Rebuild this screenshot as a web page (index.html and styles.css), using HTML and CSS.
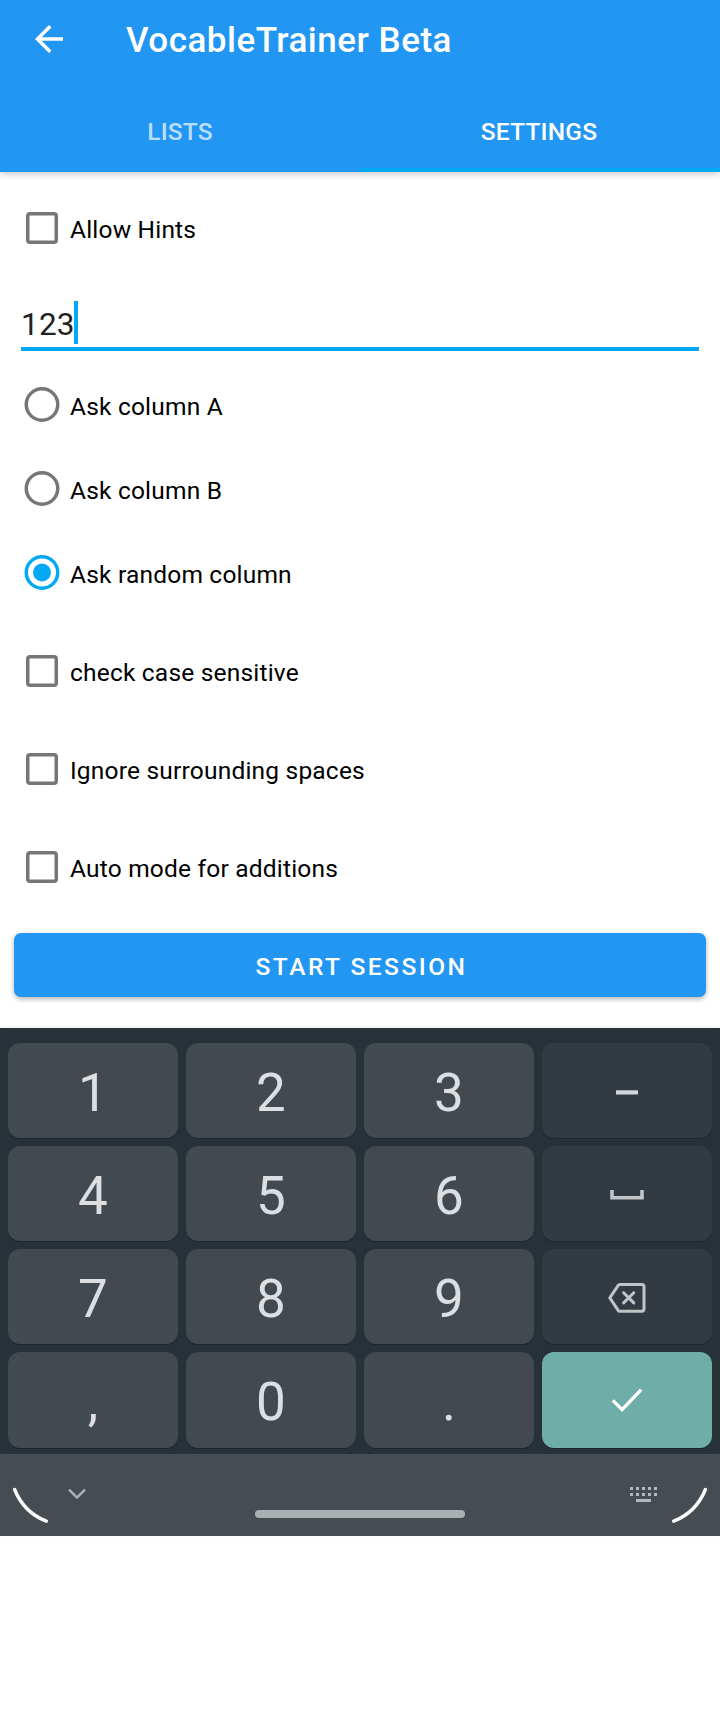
FILE: index.html
```html
<!DOCTYPE html>
<html lang="en">
<head>
<meta charset="utf-8">
<title>VocableTrainer Beta</title>
<link rel="stylesheet" href="styles.css">
</head>
<body>
<header class="appbar">
  <div class="toolbar">
    <svg class="back" width="42" height="42" viewBox="0 0 24 24"><path fill="#fff" d="M20 11H7.83l5.59-5.59L12 4l-8 8 8 8 1.41-1.41L7.83 13H20v-2z"/></svg>
    <h1 class="title">VocableTrainer Beta</h1>
  </div>
  <nav class="tabs">
    <div class="tab"><span>LISTS</span></div>
    <div class="tab active"><span>SETTINGS</span></div>
  </nav>
</header>
<main class="settings">
  <div class="row check"><i class="box"></i><span class="label">Allow Hints</span></div>
  <div class="field"><span class="value">123</span><i class="caret"></i></div>
  <div class="radios">
    <div class="row"><svg class="radio" width="36" height="36" viewBox="0 0 36 36"><circle cx="18" cy="17.5" r="15.75"/></svg><span class="label">Ask column A</span></div>
    <div class="row"><svg class="radio" width="36" height="36" viewBox="0 0 36 36"><circle cx="18" cy="17.5" r="15.75"/></svg><span class="label">Ask column B</span></div>
    <div class="row"><svg class="radio on" width="36" height="36" viewBox="0 0 36 36"><circle cx="18" cy="17.5" r="15.75"/><circle class="dot" cx="18" cy="17.5" r="9"/></svg><span class="label">Ask random column</span></div>
  </div>
  <div class="row check"><i class="box"></i><span class="label">check case sensitive</span></div>
  <div class="row check"><i class="box"></i><span class="label">Ignore surrounding spaces</span></div>
  <div class="row check"><i class="box"></i><span class="label">Auto mode for additions</span></div>
  <div class="start"><span>START SESSION</span></div>
</main>
<section class="keyboard">
  <div class="keys">
    <div class="key"><span>1</span></div><div class="key"><span>2</span></div><div class="key"><span>3</span></div>
    <div class="key fn"><svg width="22" height="5" viewBox="0 0 22 5"><path fill="#d5d8da" d="M0 .3h22v4.2H0z"/></svg></div>
    <div class="key"><span>4</span></div><div class="key"><span>5</span></div><div class="key"><span>6</span></div>
    <div class="key fn"><svg class="space" width="34" height="10" viewBox="0 0 34 10"><path fill="none" stroke="#c1c5c7" stroke-width="3.6" d="M2 0v7.8h30V0"/></svg></div>
    <div class="key"><span>7</span></div><div class="key"><span>8</span></div><div class="key"><span>9</span></div>
    <div class="key fn"><svg width="38" height="32" viewBox="0 0 38 32"><g fill="none" stroke="#c1c5c7" stroke-width="3" stroke-linejoin="round" stroke-linecap="round"><path d="M11.6 2.4H33.8Q36 2.4 36 4.6V27Q36 29.2 33.8 29.2H11.6Q10.8 29.2 10.2 28.3L1.8 15.8L10.2 3.3Q10.8 2.4 11.6 2.4Z"/><path d="M15.6 10.7l10.2 10.2M25.8 10.7L15.6 20.9"/></g></svg></div>
    <div class="key"><span>,</span></div><div class="key"><span>0</span></div><div class="key"><span>.</span></div>
    <div class="key enter"><svg width="32" height="24" viewBox="0 0 32 24"><path fill="none" stroke="#fff" stroke-width="3.4" d="M1.8 12.4l9.3 9.2L30.2 1.6"/></svg></div>
  </div>
  <div class="navbar">
    <svg class="corner" width="38" height="38" viewBox="0 0 38 38"><path fill="none" stroke="#fff" stroke-width="3.4" stroke-linecap="round" d="M2.6 2.5Q12 25.5 34.3 34.2"/></svg>
    <svg class="hide" width="18" height="12" viewBox="0 0 18 12"><path fill="none" stroke="#aeb2b4" stroke-width="2.4" d="M1 1.6l8 8 8-8"/></svg>
    <i class="pill"></i>
    <svg class="switch" width="27" height="15" viewBox="0 0 27 15"><path fill="none" stroke="#b5b8ba" stroke-width="3" stroke-dasharray="3 3" d="M0 1.5h27M0 7.5h27"/><path fill="#b5b8ba" d="M6 12h15v3H6z"/></svg>
    <svg class="corner" width="38" height="38" viewBox="0 0 38 38"><path fill="none" stroke="#fff" stroke-width="3.4" stroke-linecap="round" d="M34.4 2.5Q25 25.5 2.7 34.2"/></svg>
  </div>
</section>
</body>
</html>
```
FILE: styles.css
```css
* { box-sizing: border-box; }
body { margin: 0; width: 720px; height: 1712px; background: #fff; font-family: Roboto, "Liberation Sans", sans-serif; color: #000; }
svg, i { display: block; flex: none; }

.appbar { position: relative; height: 172px; background: #2196f3; color: #fff; box-shadow: 0 2px 7px rgba(0,0,0,.22); }
.toolbar { height: 80px; padding-left: 28px; display: flex; align-items: center; }
.back { margin-top: -2px; }
.title { margin: 1px 0 0 56px; font-size: 35px; line-height: 42px; font-weight: 500; letter-spacing: .5px; white-space: nowrap; }
.tabs { height: 92px; display: flex; }
.tab { flex: 0 0 360px; display: flex; justify-content: center; padding-top: 37px; font-size: 24.5px; line-height: 29px; font-weight: 500; letter-spacing: .2px; color: rgba(255,255,255,.7); border-bottom: 4px solid transparent; }
.tab.active { padding-right: 2px; color: #fff; border-bottom-color: #03a9f4; }

.settings { height: 856px; padding-top: 7px; }
.row { height: 84px; display: flex; align-items: center; padding-left: 24px; }
.row.check { height: 98px; }
.label { margin-left: 11px; padding-top: 3px; font-size: 24.5px; line-height: 29px; letter-spacing: .2px; white-space: nowrap; }
.box { width: 32px; height: 32px; margin: 0 1px 0 2px; box-shadow: inset 0 0 0 3.5px #767676; border-radius: 4px; }
.radio { margin-right: -1px; fill: none; stroke: #767676; stroke-width: 3.5; }
.radio.on { stroke: #03a9f4; }
.dot { fill: #03a9f4; stroke: none; }
.field { margin: 24px 21px 0; height: 50px; border-bottom: 4px solid #03a9f4; display: flex; align-items: flex-start; font-size: 31.5px; line-height: 43px; color: #212121; }
.value { padding-top: 2px; letter-spacing: .2px; }
.caret { width: 4px; height: 43px; margin-left: -.6px; background: #03a9f4; }
.radios { margin: 12px 0 7px; }
.start { margin: 17px 14px 0; height: 64px; border-radius: 7px; background: #2196f3; color: #fff; display: flex; align-items: center; justify-content: center; font-size: 24.5px; line-height: 29px; font-weight: 500; letter-spacing: 2.5px; box-shadow: 0 2px 5px rgba(0,0,0,.32); }
.start span { padding: 3px 0 0 3px; }

.keyboard { height: 508px; background: #263138; box-shadow: 0 -1px 3px rgba(0,0,0,.08); position: relative; }
.keys { height: 426px; padding: 15px 8px 6px; display: grid; grid-template-columns: repeat(4, 170px); grid-template-rows: 95px 95px 95px 96px; gap: 8px; }
.key { border-radius: 12px; background: #42494f; box-shadow: 0 1px 0 #1c262c; color: #dcdee0; display: flex; align-items: center; justify-content: center; font-size: 53px; line-height: 62px; }
.key span { padding-top: 4px; }
.key.fn { background: #313b41; }
.key.fn svg { margin-top: 3px; }
.key.enter { background: #6fada8; }
.navbar { height: 82px; background: #454d52; display: flex; align-items: flex-start; padding: 33px 12px 0; }
.hide { margin: 1px 0 0 18px; }
.pill { width: 210px; height: 8px; margin: 23px 0 0 169px; border-radius: 4px; background: #a9aeb0; }
.switch { margin: 0 14px 0 165px; }
```
